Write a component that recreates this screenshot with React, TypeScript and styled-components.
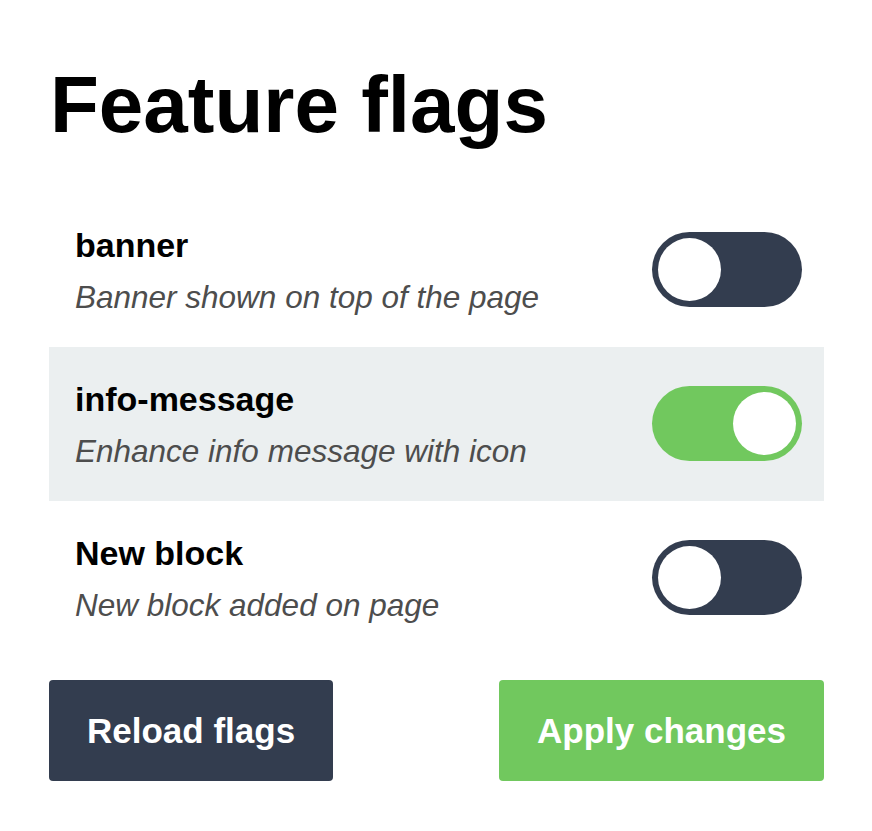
import { useState } from "react";
import styled, { createGlobalStyle } from "styled-components";

const GlobalStyle = createGlobalStyle`
  html, body {
    margin: 0;
    padding: 0;
    background: #ffffff;
    font-family: "Liberation Sans", Arial, sans-serif;
    color: #000000;
  }
`;

const Page = styled.div`
  display: flex;
  flex-direction: column;
  width: 775px;
  padding: 0 48px 0 49px;
`;

const Title = styled.h1`
  margin: 65px 0 0 1px;
  font-size: 80px;
  line-height: 80px;
  font-weight: 700;
`;

const FlagList = styled.div`
  display: flex;
  flex-direction: column;
  margin-top: 48px;
`;

const FlagRow = styled.div<{ $highlighted: boolean }>`
  display: flex;
  align-items: center;
  justify-content: space-between;
  height: 154px;
  box-sizing: border-box;
  padding: 0 22px 1px 26px;
  background-color: ${(props) => (props.$highlighted ? "#ebeff0" : "transparent")};
`;

const FlagText = styled.div`
  display: flex;
  flex-direction: column;
  gap: 14px;
`;

const FlagName = styled.span`
  font-size: 34px;
  line-height: 40px;
  font-weight: 700;
`;

const FlagDescription = styled.span`
  font-size: 31.5px;
  line-height: 36px;
  font-style: italic;
  color: #4d4d4d;
`;

const Toggle = styled.button<{ $on: boolean }>`
  display: flex;
  align-items: center;
  justify-content: ${(props) => (props.$on ? "flex-end" : "flex-start")};
  width: 150px;
  height: 75px;
  padding: 0 6px;
  box-sizing: border-box;
  border: none;
  border-radius: 38px;
  background-color: ${(props) => (props.$on ? "#71c85e" : "#333d4f")};
  cursor: pointer;
`;

const Knob = styled.span`
  width: 63px;
  height: 63px;
  border-radius: 50%;
  background-color: #ffffff;
`;

const Actions = styled.div`
  display: flex;
  justify-content: space-between;
  margin-top: 25px;
`;

const ActionButton = styled.button<{ $primary?: boolean }>`
  height: 101px;
  padding: 0 38px;
  border: none;
  border-radius: 4px;
  background-color: ${(props) => (props.$primary ? "#71c85e" : "#333d4f")};
  color: #ffffff;
  font-family: "Liberation Sans", Arial, sans-serif;
  font-size: 35px;
  font-weight: 700;
  cursor: pointer;
`;

interface Flag {
  id: string;
  name: string;
  description: string;
  enabled: boolean;
}

const initialFlags: Flag[] = [
  { id: "banner", name: "banner", description: "Banner shown on top of the page", enabled: false },
  { id: "info-message", name: "info-message", description: "Enhance info message with icon", enabled: true },
  { id: "new-block", name: "New block", description: "New block added on page", enabled: false },
];

function App() {
  const [flags, setFlags] = useState(initialFlags);

  const toggle = (id: string) =>
    setFlags((prev) =>
      prev.map((flag) => (flag.id === id ? { ...flag, enabled: !flag.enabled } : flag))
    );

  return (
    <>
      <GlobalStyle />
      <Page>
        <Title>Feature flags</Title>
        <FlagList>
          {flags.map((flag) => (
            <FlagRow key={flag.id} $highlighted={flag.id === "info-message"}>
              <FlagText>
                <FlagName>{flag.name}</FlagName>
                <FlagDescription>{flag.description}</FlagDescription>
              </FlagText>
              <Toggle $on={flag.enabled} onClick={() => toggle(flag.id)} aria-label={flag.name}>
                <Knob />
              </Toggle>
            </FlagRow>
          ))}
        </FlagList>
        <Actions>
          <ActionButton onClick={() => setFlags(initialFlags)}>Reload flags</ActionButton>
          <ActionButton $primary>Apply changes</ActionButton>
        </Actions>
      </Page>
    </>
  );
}

export default App;
